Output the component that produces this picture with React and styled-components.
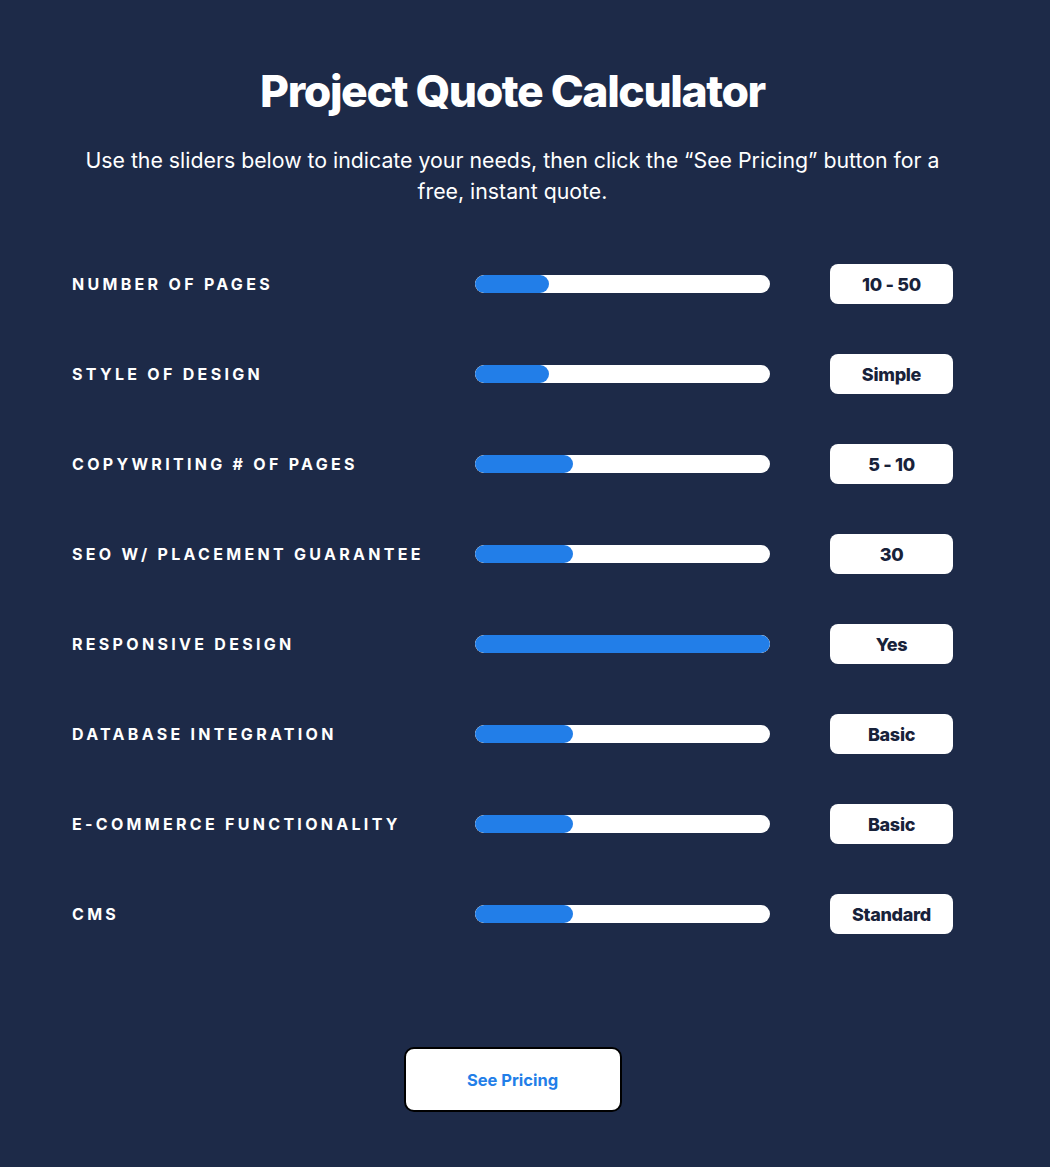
import React from 'react';
import styled, { createGlobalStyle } from 'styled-components';

const GlobalStyle = createGlobalStyle`
  html, body {
    margin: 0;
    padding: 0;
    background-color: #1d2a48;
  }
  body {
    font-family: Inter, "Noto Sans", sans-serif;
    color: #fff;
  }
`;

const options = [
  { label: 'Number of pages', value: '10 - 50', fill: 25 },
  { label: 'Style of design', value: 'Simple', fill: 25 },
  { label: 'Copywriting # of pages', value: '5 - 10', fill: 33.3 },
  { label: 'SEO w/ placement guarantee', value: '30', fill: 33.3 },
  { label: 'Responsive design', value: 'Yes', fill: 100 },
  { label: 'Database integration', value: 'Basic', fill: 33.3 },
  { label: 'E-commerce functionality', value: 'Basic', fill: 33.3 },
  { label: 'CMS', value: 'Standard', fill: 33.3 },
];

function App() {
  return (
    <>
      <GlobalStyle />
      <Page>
        <Title>Project Quote Calculator</Title>
        <Intro>
          Use the sliders below to indicate your needs, then click the “See Pricing” button for a
          free, instant quote.
        </Intro>
        <OptionList>
          {options.map(item => (
            <Row key={item.label}>
              <Label>{item.label}</Label>
              <Track>
                <Fill style={{ width: `${item.fill}%` }} />
              </Track>
              <Value>{item.value}</Value>
            </Row>
          ))}
        </OptionList>
        <ButtonWrap>
          <PricingButton type="button">See Pricing</PricingButton>
        </ButtonWrap>
      </Page>
    </>
  );
}

const Page = styled.main`
  width: 881px;
  margin-left: 72px;
  padding: 62px 0 55px;
  box-sizing: border-box;
  min-height: 1167px;
`;

const Title = styled.h1`
  margin: 0;
  text-align: center;
  font-size: 44.5px;
  font-weight: 800;
  letter-spacing: -1.4px;
  line-height: 58px;
`;

const Intro = styled.p`
  margin: 25px auto 0;
  max-width: 870px;
  text-align: center;
  font-size: 21.3px;
  line-height: 31px;
  font-weight: 400;
`;

const OptionList = styled.div`
  display: flex;
  flex-direction: column;
  gap: 50px;
  margin-top: 57px;
`;

const Row = styled.div`
  display: grid;
  grid-template-columns: 403px 295px 1fr;
  align-items: center;
  height: 40px;
`;

const Label = styled.div`
  font-size: 16px;
  font-weight: 700;
  text-transform: uppercase;
  letter-spacing: 3.3px;
`;

const Track = styled.div`
  height: 18px;
  border-radius: 9px;
  background-color: #fff;
  overflow: hidden;
`;

const Fill = styled.div`
  height: 100%;
  border-radius: 9px;
  background-color: #227ee8;
`;

const Value = styled.div`
  justify-self: end;
  width: 123px;
  height: 40px;
  box-sizing: border-box;
  display: flex;
  align-items: center;
  justify-content: center;
  background-color: #fff;
  border-radius: 8px;
  color: #18223a;
  font-size: 18px;
  font-weight: 800;
  letter-spacing: -0.3px;
`;

const ButtonWrap = styled.div`
  display: flex;
  justify-content: center;
  margin-top: 113px;
`;

const PricingButton = styled.button`
  width: 218px;
  height: 65px;
  background-color: #fff;
  border: 2px solid #000;
  border-radius: 10px;
  color: #227ee8;
  font-family: Inter, "Noto Sans", sans-serif;
  font-size: 16.5px;
  font-weight: 700;
  cursor: pointer;
`;

export default App;
